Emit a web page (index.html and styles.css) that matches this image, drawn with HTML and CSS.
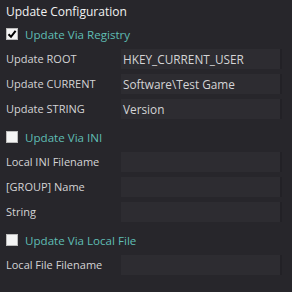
FILE: index.html
```html
<!DOCTYPE html>
<html lang="en">
<head>
<meta charset="UTF-8">
<meta name="viewport" content="width=device-width, initial-scale=1.0">
<title>Update Configuration</title>
<link rel="stylesheet" href="styles.css">
</head>
<body>
<div class="panel">
    <h2 class="title">Update Configuration</h2>

    <label class="check">
        <span class="box checked">
            <svg width="10" height="10" viewBox="0 0 10 10"><path d="M1.5 5.2 L4 7.8 L8.6 1.8" fill="none" stroke="#000" stroke-width="2"/></svg>
        </span>
        <span class="check-text">Update Via Registry</span>
    </label>
    <div class="row"><span class="lbl">Update ROOT</span><div class="field">HKEY_CURRENT_USER</div></div>
    <div class="row"><span class="lbl">Update CURRENT</span><div class="field">Software\Test Game</div></div>
    <div class="row"><span class="lbl">Update STRING</span><div class="field">Version</div></div>

    <label class="check">
        <span class="box"></span>
        <span class="check-text">Update Via INI</span>
    </label>
    <div class="row"><span class="lbl">Local INI Filename</span><div class="field"></div></div>
    <div class="row"><span class="lbl">[GROUP] Name</span><div class="field"></div></div>
    <div class="row"><span class="lbl">String</span><div class="field"></div></div>

    <label class="check">
        <span class="box"></span>
        <span class="check-text">Update Via Local File</span>
    </label>
    <div class="row"><span class="lbl">Local File Filename</span><div class="field"></div></div>
</div>
</body>
</html>
```

FILE: styles.css
```css
html, body {
    margin: 0;
    background-color: #27262b;
}
body {
    font-family: "Open Sans", "Noto Sans", sans-serif;
    color: #d4d4d6;
    font-size: 11px;
}
.panel {
    padding: 2px 10px 0 6px;
}
.title {
    margin: 0;
    font-size: 12px;
    font-weight: normal;
    color: #f2f2f2;
    line-height: 20px;
}
.check {
    display: flex;
    align-items: center;
    gap: 7px;
    height: 24px;
}
.row + .check {
    margin-top: 4px;
}
.box {
    width: 12px;
    height: 12px;
    background-color: #f4f4f4;
    display: flex;
    align-items: center;
    justify-content: center;
    box-sizing: border-box;
    border: 1px solid #bbb;
}
.check-text {
    color: #5fbdb4;
    font-size: 11.6px;
}
.row {
    display: flex;
    align-items: center;
    height: 25px;
}
.lbl {
    width: 115px;
    flex-shrink: 0;
}
.field {
    flex: 1;
    height: 20px;
    line-height: 20px;
    background-color: #2d2c31;
    border-right: 2px solid #222126;
    padding-left: 2px;
    font-size: 11.8px;
    color: #d4d4d6;
}
```
